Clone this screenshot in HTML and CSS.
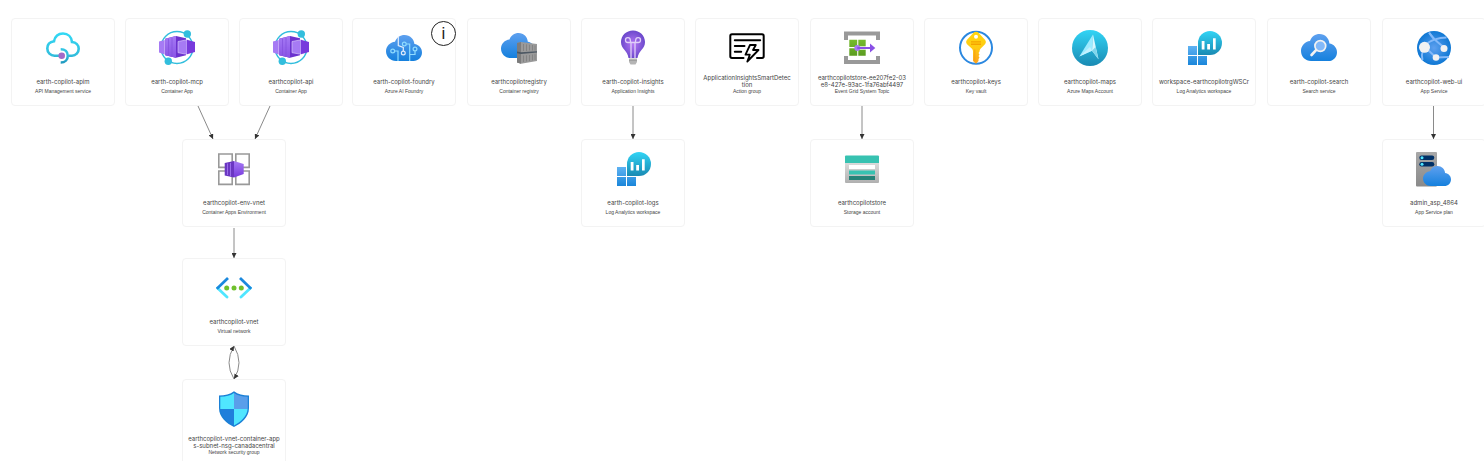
FILE: index.html
```html
<!DOCTYPE html>
<html lang="en">
<head>
<meta charset="utf-8">
<title>Resource visualizer</title>
<link rel="stylesheet" href="styles.css">
</head>
<body>
<svg class="defs" aria-hidden="true">
  <defs>
    <linearGradient id="blue" x1="0" y1="0" x2="0" y2="1"><stop offset="0" stop-color="#5ea0ef"/><stop offset="1" stop-color="#1580dd"/></linearGradient>
    <linearGradient id="sky" x1="0" y1="0" x2="0" y2="1"><stop offset="0" stop-color="#5fb2f2"/><stop offset="1" stop-color="#1a86da"/></linearGradient>
    <linearGradient id="cyan" x1="0" y1="0" x2="0" y2="1"><stop offset="0" stop-color="#32d4f5"/><stop offset="1" stop-color="#198ab3"/></linearGradient>
    <linearGradient id="apim" x1="0" y1="0" x2="0" y2="36" gradientUnits="userSpaceOnUse"><stop offset="0" stop-color="#32dcf8"/><stop offset=".7" stop-color="#32bedd"/><stop offset="1" stop-color="#198ab3"/></linearGradient>
    <linearGradient id="violet" x1="0" y1="0" x2="0" y2="1"><stop offset="0" stop-color="#a67af4"/><stop offset="1" stop-color="#773adc"/></linearGradient>
    <radialGradient id="bulb"><stop offset="0" stop-color="#b577f5"/><stop offset="1" stop-color="#6c49cc"/></radialGradient>
    <radialGradient id="globe"><stop offset="0" stop-color="#5ea0ef"/><stop offset="1" stop-color="#0f78d4"/></radialGradient>
    <linearGradient id="green" x1="0" y1="0" x2="0" y2="1"><stop offset="0" stop-color="#76bc2d"/><stop offset="1" stop-color="#5b9c20"/></linearGradient>
    <linearGradient id="gold" x1="0" y1="0" x2="0" y2="1"><stop offset="0" stop-color="#ffd70f"/><stop offset=".5" stop-color="#ffcb12"/><stop offset="1" stop-color="#fea11b"/></linearGradient>
    <linearGradient id="gray" x1="0" y1="0" x2="0" y2="1"><stop offset="0" stop-color="#dcdcdc"/><stop offset="1" stop-color="#b0b0b0"/></linearGradient>
    <linearGradient id="steel" x1="0" y1="0" x2="0" y2="1"><stop offset="0" stop-color="#a8a8a8"/><stop offset="1" stop-color="#8a8a8a"/></linearGradient>
    <marker id="arrow" viewBox="0 0 6 6" refX="6" refY="3" markerWidth="5" markerHeight="5" markerUnits="userSpaceOnUse" orient="auto"><path d="M0 0L6 3L0 6z" fill="#333"/></marker>
    <symbol id="cloud" viewBox="0 0 36 26" preserveAspectRatio="none">
      <path d="M36 17.500C36 13.200 32.800 9.700 28.400 9.100C28 4 24 0 18.600 0C14.200 0 10.500 2.500 9 6.700C4 7.200 0 11.300 0 16.300C0 21.700 4.500 26 10 26H27.500C32.300 26 36 22.300 36 17.500z" fill="url(#blue)"/>
    </symbol>
    <symbol id="container-app" viewBox="0 0 36 36">
      <circle cx="18" cy="17.500" r="16" fill="none" stroke="#32bedd" stroke-width="1.400"/>
      <circle cx="28.300" cy="4" r="3.700" fill="#32bedd"/><circle cx="9.300" cy="31.300" r="3.700" fill="#32bedd"/>
      <path d="M0 11.500L5.700 10V24.500L0 22.500z" fill="#a67af4"/>
      <path d="M6.300 8.700L17 6L27 8.300V25.300L17 27.700L6.300 25.300z" fill="#6c32cf"/>
      <path d="M6.300 8.700L17 6V27.700L6.300 25.300z" fill="url(#violet)"/>
      <path d="M6.300 8.700L17 6V27.700L6.300 25.300z" fill="#a67af4" opacity=".4"/>
      <path d="M9.500 8.500V25.500M13 7.500V26.500" stroke="#8250dd" stroke-width=".7"/>
      <path d="M19 11.500L28 9.800V24.300L19 22.700z" fill="#a67af4" stroke="#ded0fa" stroke-width=".6"/>
      <path d="M28 9.800L36 12V22L28 24.300z" fill="#773adc"/>
    </symbol>
    <symbol id="log-analytics" viewBox="0 0 36 36">
      <path d="M2 16H11V25H2z M2 26H11V35H2z M12 26H21V35H12z" fill="url(#sky)"/>
      <path d="M24 1A12 12 0 0 1 24 25H12V13A12 12 0 0 1 24 1z" fill="url(#cyan)"/>
      <path d="M15.700 11h2.800v8.500h-2.800z M21.200 14h2.800v5.500h-2.800z M27 8.300h2.700v11.200H27z" fill="#fff"/>
    </symbol>
  </defs>
</svg>

<main class="canvas">
  <svg class="edges" aria-hidden="true">
    <path d="M198 106L213 139"/>
    <path d="M270 106L255 139"/>
    <path d="M234 228V258"/>
    <path d="M234 379Q224 363 234 346"/>
    <path d="M234 346Q244 363 234 379"/>
    <path d="M633 106V139"/>
    <path d="M862 106V139"/>
    <path d="M1433.500 106V139"/>
  </svg>

  <article class="node row-1 col-1">
    <svg class="icon" viewBox="0 0 36 36" fill="none" stroke="url(#apim)" stroke-width="2.600">
      <path d="M15 25.700H9.500C5.500 25.700 2.300 22.500 2.300 18.500C2.300 14.500 5 11.700 9 11.200C10 6.500 13.500 3.500 18 3.500C23 3.500 26.500 7 27 12C31 12.500 33.700 15.200 33.700 18.800C33.700 22.700 30.800 25.700 27 25.700H24"/>
      <path d="M15.700 19.200C20 19.200 22.800 22 22.800 25.700C22.800 29.700 20 32.500 15.700 32.500"/>
      <circle cx="16.700" cy="25.700" r="3.300" fill="#a36bc8" stroke="none"/>
    </svg>
    <h2 class="name">earth-copilot-apim</h2><p class="type">API Management service</p>
  </article>

  <article class="node row-1 col-2">
    <svg class="icon"><use href="#container-app"/></svg>
    <h2 class="name">earth-copilot-mcp</h2><p class="type">Container App</p>
  </article>

  <article class="node row-1 col-3">
    <svg class="icon"><use href="#container-app"/></svg>
    <h2 class="name">earthcopilot-api</h2><p class="type">Container App</p>
  </article>

  <article class="node row-1 col-4">
    <svg class="icon" viewBox="0 0 36 36">
      <use href="#cloud" x="0" y="5" width="36" height="26"/>
      <g fill="none" stroke="#8fdcff" stroke-width="1.200">
        <circle cx="6.700" cy="21" r="1.900"/><path d="M8.600 21H12V31"/>
        <circle cx="18.300" cy="14" r="1.900"/><path d="M20.200 14H23.700V31M23.700 24.500H29V21"/><circle cx="29" cy="19" r="1.900"/>
      </g>
      <g fill="none" stroke="#e3edfb" stroke-width="1.200"><path d="M12.300 7V15.500L17.300 17.500V21"/><circle cx="17.300" cy="23" r="1.900"/></g>
    </svg>
    <h2 class="name">earth-copilot-foundry</h2><p class="type">Azure AI Foundry</p>
    <button class="info" type="button" aria-label="Information">i</button>
  </article>

  <article class="node row-1 col-5">
    <svg class="icon" viewBox="0 0 36 36">
      <use href="#cloud" x="0" y="3" width="34" height="25"/>
      <path d="M16 13L20 12L36 14V31L20 33.700L16 32.500z" fill="#9a9a9a"/>
      <path d="M16 13L20 12V33.700L16 32.500z" fill="#7c7c7c"/>
      <path d="M16 21.500L20 22.200L36 21.200V22.600L20 24L16 23.200z" fill="#4d5863"/>
      <path d="M22.500 14V21M25.500 14.300V21M28.500 14.700V20.500M31.500 15V20.500M34 15.500V20.500M22.500 25.500V32M25.500 25.200V31.500M28.500 25V31M31.500 24.500V30.500M34 24.200V30" stroke="#7d7d7d" stroke-width=".8"/>
    </svg>
    <h2 class="name">earthcopilotregistry</h2><p class="type">Container registry</p>
  </article>

  <article class="node row-1 col-6">
    <svg class="icon" viewBox="0 0 36 36">
      <path d="M18 .5C24.800 .5 30 5.500 30 12C30 19 23.500 20.500 22.500 28H13.500C12.500 20.500 6 19 6 12C6 5.500 11.200 .5 18 .5z" fill="url(#bulb)"/>
      <path d="M14 28.500H22V32L20.500 34.500H15.500L14 32z" fill="#b5b5b5"/><path d="M14 30.500H22" stroke="#999" stroke-width=".8"/>
      <path d="M16 28V12.500H13A2.400 2.400 0 1 1 15.300 10C15.300 11.500 16 12.500 16 12.500H20C20 12.500 20.700 11.500 20.700 10A2.400 2.400 0 1 1 23 12.500H20V28" fill="none" stroke="#e0cff8" stroke-width="1.300"/>
    </svg>
    <h2 class="name">earth-copilot-insights</h2><p class="type">Application Insights</p>
  </article>

  <article class="node row-1 col-7">
    <svg class="icon" viewBox="0 0 36 36" fill="none" stroke="#000" stroke-width="2" stroke-linecap="round" stroke-linejoin="round">
      <path d="M14.500 28H3Q1.300 28 1.300 26.300V6Q1.300 4.300 3 4.300H33Q34.700 4.300 34.700 6V26.300Q34.700 28 33 28H28"/>
      <path d="M5.800 10.200H31.200M5.800 16H15.500M5.800 21.800H12.200"/>
      <path d="M21 15H26.800L24 20H29.500L18.300 31.500L20.800 24.700H16.500z" stroke-width="1.800"/>
    </svg>
    <h2 class="name">ApplicationInsightsSmartDetec<br>tion</h2><p class="type">Action group</p>
  </article>

  <article class="node row-1 col-8">
    <svg class="icon" viewBox="0 0 36 36">
      <path d="M0 1.500H36V10H32V5.500H4V10H0z M0 26H4V30H32V26H36V34H0z" fill="#999"/>
      <path d="M5.300 9.700H13.200V17H5.300z M14.300 9.700H21.700V17H14.300z M5.300 18.300H13.200V25.700H5.300z M14.300 18.300H21.700V25.700H14.300z" fill="url(#green)"/>
      <path d="M13 18H27" stroke="#fff" stroke-width="3.400"/>
      <circle cx="13.300" cy="18" r="3" fill="#a67af4"/>
      <path d="M13.300 18H27" stroke="#8a50e6" stroke-width="2"/><path d="M26 13.500L31.300 18L26 22.500z" fill="#8a50e6"/>
    </svg>
    <h2 class="name">earthcopilotstore-ee207fe2-03<br>e8-427e-93ac-1fa76abf4497</h2><p class="type">Event Grid System Topic</p>
  </article>

  <article class="node row-1 col-9">
    <svg class="icon" viewBox="0 0 36 36">
      <circle cx="18" cy="17.800" r="16" fill="#fff" stroke="#2b88e0" stroke-width="2"/>
      <path fill-rule="evenodd" d="M16 2.300Q18 1 20 2.300L27.200 10Q28.700 12 27.200 14L22.500 18.800Q21.500 20 21.500 21.500L20.500 23L21.500 24.500L20.500 26L21.500 27.500L20.500 29V31L18 33.700L15 31V21.500Q15 20 14 18.800L8.800 14Q7.300 12 8.800 10zM18 4.700A2 2 0 1 0 18 8.700A2 2 0 1 0 18 4.700z" fill="url(#gold)"/>
      <path d="M13 11.200H23V12.600H13z M13 13.600H23V15H13z" fill="#f5a300"/><path d="M16.800 19.500V31" stroke="#f39a14" stroke-width=".8"/>
    </svg>
    <h2 class="name">earthcopilot-keys</h2><p class="type">Key vault</p>
  </article>

  <article class="node row-1 col-10">
    <svg class="icon" viewBox="0 0 36 36">
      <circle cx="18" cy="18" r="18" fill="url(#cyan)"/>
      <path d="M21 4.500L7.300 26.500L20 20.800z" fill="#9cebff"/><path d="M21 4.500L20 20.800L26.500 29.300z" fill="#d8f7ff"/><path d="M20 20.800L7.300 26.500L18 17z" fill="#c3f1ff"/><path d="M20 20.800L26.500 29.300L23.500 17z" fill="#7fd6ec"/>
    </svg>
    <h2 class="name">earthcopilot-maps</h2><p class="type">Azure Maps Account</p>
  </article>

  <article class="node row-1 col-11">
    <svg class="icon"><use href="#log-analytics"/></svg>
    <h2 class="name">workspace-earthcopilotrgWSCr</h2><p class="type">Log Analytics workspace</p>
  </article>

  <article class="node row-1 col-12">
    <svg class="icon" viewBox="0 0 36 36">
      <use href="#cloud" x="0" y="4" width="36" height="27"/>
      <path d="M15.500 19.700L10.500 25" stroke="#f2f2f2" stroke-width="2.600" stroke-linecap="round"/>
      <circle cx="19.300" cy="16" r="5.400" fill="#83b9f9" stroke="#f2f2f2" stroke-width="1.700"/>
    </svg>
    <h2 class="name">earth-copilot-search</h2><p class="type">Search service</p>
  </article>

  <article class="node row-1 col-13">
    <svg class="icon" viewBox="0 0 36 36">
      <circle cx="18" cy="18" r="17" fill="url(#globe)"/>
      <g fill="none" stroke="#83b9f9" stroke-width="2"><path d="M13 2.500Q16 8 27.500 17M10 14Q18 8 30.500 7.500" /><path d="M10 18L20 27.500L33 27M7 20Q5 25 6.500 30M13.500 3L18 9"/></g>
      <circle cx="8.500" cy="17.300" r="5.500" fill="#f2f2f2"/><circle cx="28" cy="18.500" r="3.500" fill="#f2f2f2"/><circle cx="20" cy="27.500" r="3.300" fill="#f2f2f2"/>
    </svg>
    <h2 class="name">earthcopilot-web-ui</h2><p class="type">App Service</p>
  </article>

  <article class="node row-2 col-env">
    <svg class="icon" viewBox="0 0 36 36">
      <path d="M2.800 3H16.200V16.400H2.800z M19.800 3H33.200V16.400H19.800z M2.800 20H16.200V33.400H2.800z M19.800 20H33.200V33.400H19.800z" fill="#fff" stroke="#999" stroke-width="1.600"/>
      <path d="M8.700 12L18 10V26.500L8.700 24.500z" fill="#6a36c2"/><path d="M11.500 12.500V24M14.500 12V25" stroke="#a67af4" stroke-width=".8"/>
      <path d="M18 10L27.700 13V23L18 26.500z" fill="url(#violet)"/>
    </svg>
    <h2 class="name">earthcopilot-env-vnet</h2><p class="type">Container Apps Environment</p>
  </article>

  <article class="node row-2 col-6">
    <svg class="icon"><use href="#log-analytics"/></svg>
    <h2 class="name">earth-copilot-logs</h2><p class="type">Log Analytics workspace</p>
  </article>

  <article class="node row-2 col-8">
    <svg class="icon" viewBox="0 0 36 36">
      <path d="M1 11H35V31Q35 32 34 32H2Q1 32 1 31z" fill="url(#gray)"/><path d="M1 12V5.500Q1 4.500 2 4.500H34Q35 4.500 35 5.500V12z" fill="#37c2b1"/>
      <path d="M5 14H31V18H5z" fill="#fff"/><path d="M5 19.500H31V23.500H5z" fill="#37c2b1"/><path d="M5 25H31V29H5z" fill="#258277"/>
    </svg>
    <h2 class="name">earthcopilotstore</h2><p class="type">Storage account</p>
  </article>

  <article class="node row-2 col-13">
    <svg class="icon" viewBox="0 0 36 36">
      <rect x="0" y="1" width="21" height="34.500" rx="1" fill="url(#steel)"/>
      <rect x="3.300" y="4.500" width="15" height="4.400" rx="2.200" fill="#003067"/><rect x="3.300" y="11" width="15" height="4.400" rx="2.200" fill="#003067"/>
      <circle cx="6" cy="6.700" r="1.500" fill="#50e6ff"/><circle cx="6" cy="13.200" r="1.500" fill="#50e6ff"/>
      <use href="#cloud" x="7" y="15" width="28" height="20"/>
    </svg>
    <h2 class="name">admin_asp_4864</h2><p class="type">App Service plan</p>
  </article>

  <article class="node row-3 col-env">
    <svg class="icon" viewBox="0 0 36 36" fill="none" stroke-width="2.800">
      <path d="M1.500 18L11 27M34.500 18L25 27" stroke="#50e6ff" stroke-linecap="round"/>
      <path d="M.8 18.800L12 8M35.200 18.800L24 8" stroke="#1b88dd"/>
      <g fill="#70c02c"><circle cx="10.700" cy="18" r="2.500"/><circle cx="18" cy="18" r="2.500"/><circle cx="25.300" cy="18" r="2.500"/></g>
    </svg>
    <h2 class="name">earthcopilot-vnet</h2><p class="type">Virtual network</p>
  </article>

  <article class="node row-4 col-env">
    <svg class="icon" viewBox="0 0 36 36">
      <path d="M18 .3C22 3.500 27 4.300 33 4.500V17C33 26.500 25 32.500 18 36C11 32.500 3 26.500 3 17V4.500C9 4.300 14 3.500 18 .3z" fill="#1b80d6"/>
      <path d="M18 2C14.500 4.600 10 5.600 4.300 5.800V18H18z" fill="#50e6ff"/><path d="M18 2C21.500 4.600 26 5.600 31.700 5.800V18H18z" fill="#5a9eea"/>
      <path d="M18 18H31.600C31 25.500 24.500 31 18 34.500z" fill="#50e6ff"/><path d="M18 18H4.400C5 25.500 11.500 31 18 34.500z" fill="#1f7fdb"/>
    </svg>
    <h2 class="name">earthcopilot-vnet-container-app<br>s-subnet-nsg-canadacentral</h2><p class="type">Network security group</p>
  </article>
</main>
</body>
</html>
```
FILE: styles.css
```css
* { box-sizing: border-box; }

body {
  margin: 0;
  background: #fff;
  font-family: "Liberation Sans", Arial, sans-serif;
  color: #444;
}

.defs { position: absolute; width: 0; height: 0; }

.canvas {
  position: relative;
  height: 100vh;
  overflow: hidden;
}

.edges {
  position: absolute;
  inset: 0;
  width: 100%;
  height: 100%;
  fill: none;
  stroke: #8a8a8a;
  stroke-width: 1;
}
.edges path { marker-end: url(#arrow); }

/* Graph nodes, placed on the free canvas */
.node {
  position: absolute;
  width: 104px;
  height: 88px;
  padding: 11px 4px 0;
  display: flex;
  flex-direction: column;
  align-items: center;
  background: #fff;
  border: 1px solid #f3f3f3;
  border-radius: 4px;
  text-align: center;
}

.row-1 { top: 18px; }
.row-2 { top: 139px; }
.row-3 { top: 258px; }
.row-4 { top: 379px; }

.col-1 { left: 11px; }
.col-2 { left: 125px; }
.col-3 { left: 239px; }
.col-4 { left: 352px; }
.col-5 { left: 467px; }
.col-6 { left: 581px; }
.col-7 { left: 695px; }
.col-8 { left: 810px; }
.col-9 { left: 924px; }
.col-10 { left: 1038px; }
.col-11 { left: 1152px; }
.col-12 { left: 1267px; }
.col-13 { left: 1382px; }
.col-env { left: 182px; }

.icon {
  flex: none;
  width: 36px;
  height: 36px;
}

.name {
  height: 14px;
  margin: 8px 0 0;
  font-family: Inter, "Liberation Sans", sans-serif;
  font-size: 6px;
  font-weight: 400;
  line-height: 7px;
  white-space: nowrap;
  align-content: center;
}

.type {
  margin: 0;
  font-size: 5px;
  line-height: 6px;
  white-space: nowrap;
}

.info {
  position: absolute;
  top: 2px;
  right: -1px;
  width: 25px;
  height: 25px;
  padding: 0;
  border: 1px solid #222;
  border-radius: 50%;
  background: #fff;
  color: #222;
  font: 17px/22px "Liberation Sans", Arial, sans-serif;
}
```
